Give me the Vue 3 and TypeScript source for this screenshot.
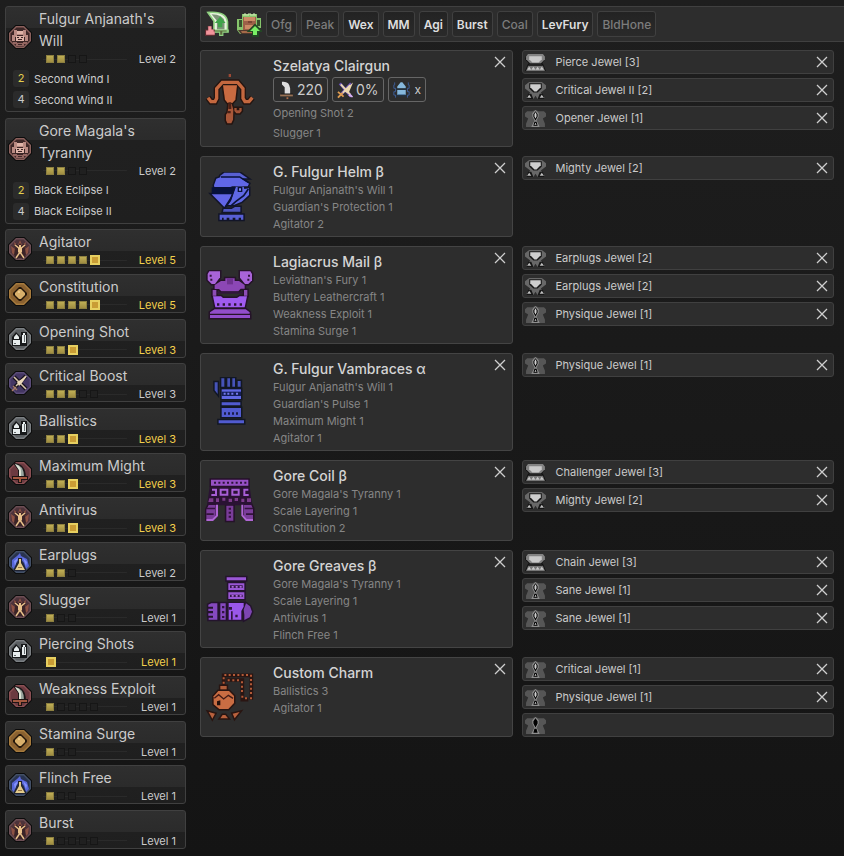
<script setup lang="ts">
import { h, type FunctionalComponent } from 'vue'

interface Shape {
  d: string
  fill?: string
  stroke?: string
  width?: number
  back?: boolean
}
interface Drawing {
  box: string
  shapes: Shape[]
}
interface Skill {
  name: string
  icon: string
  level: number
  max: number
  bonuses?: { pieces: number; name: string; active: boolean }[]
}
interface Gear {
  name: string
  icon: string
  skills: string[]
  weapon?: boolean
  jewels: { name: string; size: number }[]
}

const octagon = 'M8 1H16L23 8V16L16 23H8L1 16V8Z'
const f = (fill: string, d: string): Shape => ({ d, fill })
const s = (stroke: string, width: number, d: string): Shape => ({ d, stroke, width })
const outlined = (fill: string, edge: string, d: string): Shape[] => [
  { d, stroke: edge, width: 9, back: true },
  f(fill, d),
]
const badge = (fill: string, rim: string): Shape[] => [
  s('#0c0c0c', 2, octagon),
  f(rim, octagon),
  f(fill, 'M8.500 2.500H15.500L21.500 8.500V15.500L15.500 21.500H8.500L2.500 15.500V8.500Z'),
]

const drawings: Record<string, Drawing> = {
  set: {
    box: '0 0 24 24',
    shapes: [
      ...badge('#3d2727', '#8a605c'),
      f('#b98a82', 'M6 5H9V7H15V5H18V10H20V16H17V12H15V10H9V12H7V16H4V10H6Z'),
      f('#dfb4a8', 'M9 6H15V9H9ZM8 11H16V16H8Z'),
      f('#3d2525', 'M9 12H11V13H9ZM13 12H15V13H13ZM10 14H14V15H10Z'),
      f('#946661', 'M5 17H9V18H15V17H19V19H16V21H8V19H5Z'),
      f('#3d2727', 'M10 19H14V20H10Z'),
    ],
  },
  body: {
    box: '0 0 24 24',
    shapes: [
      ...badge('#4d333a', '#6c4e54'),
      f('#8d5244', 'M4 16L3 9L7 12L6 5L10 8L12 3L14 8L18 5L17 12L21 9L20 16L16 20H8Z'),
      f('#3b2428', 'M7 11L10 9L12 6L14 9L17 11L18 18L15 21H9L6 18Z'),
      s('#3b2428', 4, 'M7 8L12 12L17 8M8 21L12 14L16 21'),
      s('#e8c08a', 1.5, 'M7 8L12 12L17 8M8 21L12 15L16 21'),
      f('#e8c08a', 'M11 8H13V11H14V15L12 17L10 15V11H11Z'),
    ],
  },
  stamina: {
    box: '0 0 24 24',
    shapes: [
      ...badge('#8a6130', '#a67a3c'),
      f('#24170a', 'M11 5H13L19 11V13L13 19H11L5 13V11Z'),
      f('#d9b06b', 'M11 7H13L17 11V13L13 17H11L7 13V11Z'),
      f('#ecca8b', 'M10 9H12V11H10Z'),
    ],
  },
  shot: {
    box: '0 0 24 24',
    shapes: [
      ...badge('#5b5f62', '#7b7f82'),
      f('#17191b', 'M4 10L8 5L13 10V19H4ZM13 5H19V19H13Z'),
      f('#e7edee', 'M6 10L8.500 7L11 10V12H6ZM5 13H12V18H5ZM15 6H17V8H18V16H14V8H15Z'),
      f('#646b6e', 'M6 16H8V17H6ZM16 8H17V15H16Z'),
    ],
  },
  crit: {
    box: '0 0 24 24',
    shapes: [
      ...badge('#443663', '#5b4c78'),
      s('#17121e', 4, 'M6 6L18 18M18 5L6 17'),
      s('#d9c6ab', 1.5, 'M6 6L18 18M18 5L8 15'),
      s('#a77b67', 1.5, 'M5 15L9 19M4 20L8 16'),
      f('#ead7b9', 'M9 11L19 5L14 12L11 15Z'),
    ],
  },
  blade: {
    box: '0 0 24 24',
    shapes: [
      ...badge('#6b3a40', '#8a4f53'),
      f('#1b1718', 'M5 2Q18 2 18 17H10V9Z'),
      f('#9aa69f', 'M7 3Q16 4 16 16H11V9Z'),
      f('#dfe4d6', 'M7 3Q13 5 13 10V16H11V9Z'),
      f('#1e1414', 'M4 15H20V19H14V22H10V19H4Z'),
      f('#a3583f', 'M5 16H19V18H13V21H11V18H5Z'),
    ],
  },
  ear: {
    box: '0 0 24 24',
    shapes: [
      ...badge('#29334f', '#435066'),
      f('#5867d8', 'M4 17V10L9 6L12 3L13 6L19 9L21 16L18 19L16 13L12 8L8 13L6 19Z'),
      f('#8292ff', 'M6 11L10 8L7 16ZM15 8L19 12L18 16Z'),
      f('#202332', 'M10 8H14V12L19 21H5L10 12Z'),
      f('#e3cb8a', 'M11 9H13V13L17 20H7L11 13Z'),
      f('#987544', 'M10 17H14V18H10Z'),
    ],
  },
  gun: {
    box: '30 217 150 156',
    shapes: [
      s('#241511', 18, 'M39 288L48 300H60L65 290V261L82 242H128L144 261V290L150 300H162L172 288'),
      s('#c4683f', 10, 'M39 288L48 300H60L65 290V261L82 242H128L144 261V290L150 300H162L172 288'),
      ...outlined('#c96b41', '#241511', 'M84 251H126L121 294L112 304H98L90 294Z'),
      ...outlined('#a85739', '#241511', 'M101 306H110L115 325L114 354L109 365H97L93 356V339L98 332Z'),
      f('#4a2016', 'M100 302H109V322H100ZM97 328H107V335H97Z'),
      ...outlined('#a35437', '#241511', 'M118 319H125V326H133V319H140V328L134 335H124L118 328Z'),
      f('#9e4934', 'M101 217H108V226H101Z'),
    ],
  },
  helm: {
    box: '30 61 150 156',
    shapes: [
      ...outlined('#5860d2', '#121528', 'M76 72L88 63H134L158 80H76Z'),
      ...outlined('#6067e6', '#121528', 'M57 101L64 81L76 77H132L162 96L158 104H112L106 106H58Z'),
      f('#07113b', 'M50 107H122L112 128H50Z'),
      s('#07113b', 4, 'M78 76H134L160 92'),
      ...outlined('#6165e6', '#121528', 'M50 128H112L88 166Z'),
      ...outlined('#5f68e4', '#121528', 'M122 105H146L148 112L162 110V130L140 150L116 160H98L108 146Z'),
      s('#0b1338', 5, 'M120 106L106 146L92 166M160 112L146 132L122 150L106 164'),
      f('#0b1338', 'M128 106H142V121H128Z'),
      f('#7c87f3', 'M132 110H138V117H132Z'),
      ...outlined('#4e55be', '#121528', 'M86 172H110L120 166H136V180H84Z'),
      ...outlined('#585fd5', '#121528', 'M74 189H145V204H138V198H131V204H121V198H113V204H103V198H95V204H86V198H81V204H74Z'),
    ],
  },
  mail: {
    box: '30 357 150 156',
    shapes: [
      ...outlined('#a863d8', '#251329', 'M43 361H75V379L60 399H50L38 387V369Z'),
      ...outlined('#a863d8', '#251329', 'M135 361H166L171 369V388L160 399H150L135 380Z'),
      f('#32153d', 'M44 371H50V377H44ZM46 383H52V389H46ZM159 371H165V377H159ZM157 383H163V389H157Z'),
      ...outlined('#8c47b5', '#251329', 'M91 382H119V390H132L149 402V413H137L130 421H79L72 414H59V402L78 390H91Z'),
      f('#6f328f', 'M96 382H114V400H96Z'),
      f('#32153d', 'M66 422H144V428H66Z'),
      ...outlined('#8d4cb6', '#251329', 'M53 417H64V434H53ZM147 417H157V434H147Z'),
      ...outlined('#a05bf0', '#251329', 'M54 436H78L84 441H126L134 436H156L149 469H61Z'),
      f('#2b1437', 'M66 457H73V464H66ZM83 457H90V464H83ZM100 457H107V464H100ZM117 457H124V464H117ZM134 457H141V464H134Z'),
      ...outlined('#914dcb', '#251329', 'M59 475H152L164 484V488H45V484ZM45 492H165V501H45Z'),
    ],
  },
  arms: {
    box: '30 92 150 156',
    shapes: [
      ...outlined('#4653b8', '#121724', 'M59 108H68V143L59 132ZM79 96H88V121H79ZM97 96H105V121H97ZM112 96H120V121H112ZM128 104H137V121H128Z'),
      ...outlined('#6168e3', '#121724', 'M80 129H138V158H80Z'),
      f('#151e58', 'M80 136H138V149H80Z'),
      f('#7478ed', 'M86 139H92V145H86ZM97 139H103V145H97ZM109 139H115V145H109ZM123 139H129V145H123Z'),
      ...outlined('#515bd0', '#121724', 'M80 168H136V177H80ZM80 185H138V212H80ZM71 222H147V231H71Z'),
      f('#191c48', 'M87 198H93V205H87ZM99 198H105V205H99ZM111 198H117V205H111ZM123 198H129V205H123Z'),
    ],
  },
  coil: {
    box: '30 388 150 156',
    shapes: [
      f('#2a1233', 'M44 420H164L172 476H36Z'),
      ...outlined('#9650c4', '#251129', 'M48 399H160V417H48Z'),
      f('#2b1238', 'M57 405H63V411H57ZM70 405H76V411H70ZM83 405H89V411H83ZM96 405H102V411H96ZM109 405H115V411H109ZM122 405H128V411H122ZM135 405H141V411H135ZM148 405H154V411H148Z'),
      s('#a75ed6', 6, 'M51 429H63V445H49M77 429H97V444H77V426M112 429H131V444H112V426M160 429H148V445H161'),
      f('#7c3b8a', 'M43 455H55V466H40ZM63 455H72V466H63ZM82 453H91V462H82ZM101 456H111V466H101ZM119 454H129V463H119ZM139 456H148V466H139ZM156 455H168V466H156Z'),
      ...outlined('#7a3d99', '#251129', 'M41 475H62V507L53 518H34V489ZM94 477H115V522H94ZM147 475H169L174 486V518H155L147 507Z'),
      f('#34133e', 'M35 483H60V488H35ZM34 500H56V505H34ZM101 483H108V489H101ZM101 495H108V501H101ZM101 507H108V513H101ZM149 483H174V488H149ZM153 500H174V505H153Z'),
      s('#b066d4', 6, 'M66 474V507L53 520H34M142 474V506L154 520H174'),
    ],
  },
  boots: {
    box: '30 83 150 156',
    shapes: [
      ...outlined('#9a57d6', '#24142d', 'M95 93H153V102H95ZM100 111H148V131H100ZM100 138H148V158H100Z'),
      f('#35194a', 'M105 117H143V125H105ZM105 145H143V152H105Z'),
      f('#b16cde', 'M110 119H116V124H110ZM122 119H128V124H122ZM134 119H140V124H134ZM110 146H116V151H110ZM122 146H128V151H122ZM134 146H140V151H134Z'),
      ...outlined('#8549bf', '#24142d', 'M49 171H67V220H41V214H54V208H40V201H54V194H40V187H54V181H40V175ZM76 171H92V220H76Z'),
      ...outlined('#9a57ea', '#24142d', 'M101 170H146V181L139 194V220H101Z'),
      ...outlined('#7d45b2', '#24142d', 'M153 171L165 180L171 196L164 213L148 221V205L146 190Z'),
      f('#321541', 'M81 179H88V186H81ZM81 194H88V201H81ZM81 209H88V215H81ZM101 182H111V190H101ZM121 205H128V213H121ZM108 195H113V220H108Z'),
    ],
  },
  charm: {
    box: '30 376 150 156',
    shapes: [
      s('#2a1512', 11, 'M86 420V386H169V459M94 400H142V459H160'),
      f('#b35a37', 'M83 405H89V411H83ZM83 392H89V398H83ZM88 382H94V388H88ZM101 382H107V388H101ZM114 382H120V388H114ZM127 382H133V388H127ZM140 382H146V388H140ZM153 382H159V388H153ZM165 384H171V390H165ZM165 397H171V403H165ZM165 410H171V416H165ZM165 423H171V429H165ZM165 436H171V442H165ZM165 452H171V458H165ZM98 398H104V404H98ZM112 398H118V404H112ZM126 398H132V404H126ZM138 404H144V410H138ZM138 417H144V423H138ZM138 430H144V436H138ZM139 447H145V453H139ZM150 452H156V458H150Z'),
      ...outlined('#b05e3b', '#291511', 'M76 418H95V428H76Z'),
      ...outlined('#c96d43', '#291511', 'M70 433H102L117 448V469L100 487H73L56 473V449Z'),
      s('#421b16', 4, 'M58 455L71 444L86 457L100 446L114 455'),
      f('#25100c', 'M66 464L76 461V476H66Z'),
      ...outlined('#b9613d', '#291511', 'M41 496L60 501L52 516ZM113 501L134 496L119 515ZM76 515L83 505H91L99 515Z'),
    ],
  },
  attack: {
    box: '0 0 24 24',
    shapes: [
      s('#8fd080', 3, 'M4 2Q19 1 20 10V18H9V9Z'),
      f('#e9f5df', 'M4 2Q19 1 20 10V18H9V9Z'),
      f('#7d9478', 'M6 3Q17 3 18 10V17H11V9Z'),
      f('#3fa34a', 'M14 5L19 11H16V15H12V11H9Z'),
      f('#8fd080', 'M7 17H22V20H17V23H13V20H7Z'),
      f('#5f6b3f', 'M9 18H20V19H16V22H14V19H9Z'),
      f('#5d2b30', 'M2 14H6V17H9V23H0V17H3Z'),
      f('#f2949b', 'M3 14H6V17H8V19H9V22H1V18H3Z'),
    ],
  },
  meal: {
    box: '0 0 26 24',
    shapes: [
      f('#86c56c', 'M6 2H21V6H25V16H22V22H4L1 18V7H6Z'),
      f('#37502c', 'M3 8H6V15H3ZM21 8H24V14H21Z'),
      f('#9c6048', 'M7 5H20V18H7Z'),
      f('#cc8b66', 'M8 5H19V9H8ZM9 13H17V17H9Z'),
      f('#7b4434', 'M12 9H16V11H12Z'),
      s('#cfe9b4', 1, 'M8 4V2H10V4M12 4V2H15V4M17 4V2H19V4'),
      f('#50392d', 'M2 18H17V22H5Z'),
      f('#a56b49', 'M5 19H18V21H6Z'),
      s('#224824', 2, 'M19 13L25 19H22V24H17V19H13Z'),
      f('#79ef65', 'M19 14L24 19H21V23H17V19H14Z'),
    ],
  },
  sword: {
    box: '0 0 16 22',
    shapes: [
      f('#dedede', 'M3 2Q11 1 12 9V15H6V8L3 5Z'),
      f('#141414', 'M2 15H15V16H2Z'),
      f('#997255', 'M1 16H15V18H1Z'),
      f('#b06d47', 'M8 19H10V21H8Z'),
    ],
  },
  affinity: {
    box: '0 0 18 20',
    shapes: [
      s('#6850b7', 3, 'M3 3L15 17M15 3L4 15'),
      f('#ecd8b0', 'M17 2L12 14L7 11Z'),
      s('#ecd8b0', 2, 'M4 4L14 15M14 5L6 13'),
      s('#df9c50', 2, 'M1 12L7 17M1 18L6 13'),
      f('#d6b1ee', 'M14 14L17 17L16 18L12 16Z'),
    ],
  },
  ammo: {
    box: '0 0 20 20',
    shapes: [
      s('#3f63a6', 1, 'M2 1V4H1V8H3V12H1V16H3V19M18 1V4H19V8H17V12H19V16H17V19'),
      f('#86b8dc', 'M9 1H11L15 6V8H5V6ZM5 10H15V16H5Z'),
      f('#456e96', 'M5 15H15V16H5Z'),
      s('#1c354b', 1, 'M4 9H16M4 17H16'),
    ],
  },
}

const slot = (size: number, empty = false): Drawing => ({
  box: '0 0 20 16',
  shapes: size === 3
    ? [
        f('#111', 'M1 1H19V5L16 9H17L20 16H0L3 9H4L0 5Z'),
        f('#828282', 'M1 2L3 0H17L19 2V5L15 9H5L1 5Z'),
        f('#c8c8c8', 'M4 2H16V5L13 8H7L4 5Z'),
        f('#777', 'M3 11H17L19 16H1Z'),
        f('#222', 'M4 9H16V11H4Z'),
        f('#c9c9c9', 'M4 12L6 15H2ZM8 12L10 15H6ZM12 12L14 15H10ZM16 12L18 15H14Z'),
      ]
    : size === 2
      ? [
          f('#686868', 'M0 3L4 0H16L20 3V6L15 10L19 15V16H12L10 13L8 16H1V15L5 10L0 6Z'),
          f('#181818', 'M4 1H16V6L12 10H8L4 6Z'),
          f('#cecece', 'M5 2H15V5L11 9H9L5 5Z'),
          f('#161616', 'M3 11H6L8 16H1ZM14 11H17L19 16H12Z'),
          f('#c0c0c0', 'M4 12L6 15H2ZM16 12L18 15H14Z'),
        ]
      : [
          f('#565656', 'M0 3L2 1H7L10 0L13 1H18L20 3V6L17 8L19 13V16H1V13L3 8L0 6Z'),
          f('#8e8e8e', 'M10 0L13 3V6L11 10L14 16H6L9 10L7 6V3Z'),
          f('#000', 'M10 1L12 4V6L10 10L8 6V4ZM9 11H11L12 15H8Z'),
          f(empty ? '#000' : '#cfcfcf', 'M10 2L11 4V6L10 8L9 6V4ZM10 12L11 14H9Z'),
        ],
})

const Icon: FunctionalComponent<{ drawing: Drawing }> = ({ drawing }) => {
  const layers = [...drawing.shapes.filter((p) => p.back), ...drawing.shapes.filter((p) => !p.back)]
  return h('svg', { viewBox: drawing.box, 'aria-hidden': 'true' },
    layers.map((p) => h('path', { d: p.d, fill: p.fill ?? 'none', stroke: p.stroke, 'stroke-width': p.width })),
  )
}
Icon.props = ['drawing']

const cross: Drawing = { box: '0 0 12 12', shapes: [s('#cfcfcf', 1.25, 'M1 1L11 11M11 1L1 11')] }

const skills: Skill[] = [
  { name: "Fulgur Anjanath's Will", icon: 'set', level: 2, max: 4, bonuses: [{ pieces: 2, name: 'Second Wind I', active: true }, { pieces: 4, name: 'Second Wind II', active: false }] },
  { name: "Gore Magala's Tyranny", icon: 'set', level: 2, max: 4, bonuses: [{ pieces: 2, name: 'Black Eclipse I', active: true }, { pieces: 4, name: 'Black Eclipse II', active: false }] },
  { name: 'Agitator', icon: 'body', level: 5, max: 5 },
  { name: 'Constitution', icon: 'stamina', level: 5, max: 5 },
  { name: 'Opening Shot', icon: 'shot', level: 3, max: 3 },
  { name: 'Critical Boost', icon: 'crit', level: 3, max: 5 },
  { name: 'Ballistics', icon: 'shot', level: 3, max: 3 },
  { name: 'Maximum Might', icon: 'blade', level: 3, max: 3 },
  { name: 'Antivirus', icon: 'body', level: 3, max: 3 },
  { name: 'Earplugs', icon: 'ear', level: 2, max: 3 },
  { name: 'Slugger', icon: 'body', level: 1, max: 3 },
  { name: 'Piercing Shots', icon: 'shot', level: 1, max: 1 },
  { name: 'Weakness Exploit', icon: 'blade', level: 1, max: 5 },
  { name: 'Stamina Surge', icon: 'stamina', level: 1, max: 3 },
  { name: 'Flinch Free', icon: 'ear', level: 1, max: 3 },
  { name: 'Burst', icon: 'body', level: 1, max: 5 },
]

const toggles = [
  { label: 'Ofg', on: false },
  { label: 'Peak', on: false },
  { label: 'Wex', on: true },
  { label: 'MM', on: true },
  { label: 'Agi', on: true },
  { label: 'Burst', on: true },
  { label: 'Coal', on: false },
  { label: 'LevFury', on: true },
  { label: 'BldHone', on: false },
]

const gear: Gear[] = [
  { name: 'Szelatya Clairgun', icon: 'gun', weapon: true, skills: ['Opening Shot 2', 'Slugger 1'], jewels: [{ name: 'Pierce Jewel', size: 3 }, { name: 'Critical Jewel II', size: 2 }, { name: 'Opener Jewel', size: 1 }] },
  { name: 'G. Fulgur Helm β', icon: 'helm', skills: ["Fulgur Anjanath's Will 1", "Guardian's Protection 1", 'Agitator 2'], jewels: [{ name: 'Mighty Jewel', size: 2 }] },
  { name: 'Lagiacrus Mail β', icon: 'mail', skills: ["Leviathan's Fury 1", 'Buttery Leathercraft 1', 'Weakness Exploit 1', 'Stamina Surge 1'], jewels: [{ name: 'Earplugs Jewel', size: 2 }, { name: 'Earplugs Jewel', size: 2 }, { name: 'Physique Jewel', size: 1 }] },
  { name: 'G. Fulgur Vambraces α', icon: 'arms', skills: ["Fulgur Anjanath's Will 1", "Guardian's Pulse 1", 'Maximum Might 1', 'Agitator 1'], jewels: [{ name: 'Physique Jewel', size: 1 }] },
  { name: 'Gore Coil β', icon: 'coil', skills: ["Gore Magala's Tyranny 1", 'Scale Layering 1', 'Constitution 2'], jewels: [{ name: 'Challenger Jewel', size: 3 }, { name: 'Mighty Jewel', size: 2 }] },
  { name: 'Gore Greaves β', icon: 'boots', skills: ["Gore Magala's Tyranny 1", 'Scale Layering 1', 'Antivirus 1', 'Flinch Free 1'], jewels: [{ name: 'Chain Jewel', size: 3 }, { name: 'Sane Jewel', size: 1 }, { name: 'Sane Jewel', size: 1 }] },
  { name: 'Custom Charm', icon: 'charm', skills: ['Ballistics 3', 'Agitator 1'], jewels: [{ name: 'Critical Jewel', size: 1 }, { name: 'Physique Jewel', size: 1 }, { name: '', size: 1 }] },
]
</script>

<template>
  <div class="planner">
    <aside class="skills">
      <section v-for="skill in skills" :key="skill.name" class="skill">
        <div class="skill-head">
          <Icon class="skill-icon" :drawing="drawings[skill.icon]" />
          <div class="skill-body">
            <h3 class="skill-name">{{ skill.name }}</h3>
            <div class="skill-level" :class="{ full: skill.level === skill.max }">
              <div class="track">
                <span
                  v-for="n in skill.max"
                  :key="n"
                  class="pip"
                  :class="{ lit: n <= skill.level, top: n === skill.max && n === skill.level }"
                ></span>
              </div>
              <span class="level-text">Level {{ skill.level }}</span>
            </div>
          </div>
        </div>
        <ul v-if="skill.bonuses" class="bonuses">
          <li v-for="bonus in skill.bonuses" :key="bonus.name" class="bonus">
            <span class="pieces" :class="{ active: bonus.active }">{{ bonus.pieces }}</span>
            {{ bonus.name }}
          </li>
        </ul>
      </section>
    </aside>

    <main class="build">
      <div class="toolbar">
        <button type="button" class="buff" aria-label="Attack boosts"><Icon class="buff-icon" :drawing="drawings.attack" /></button>
        <button type="button" class="buff" aria-label="Meal boosts"><Icon class="buff-icon" :drawing="drawings.meal" /></button>
        <div class="toggles">
          <button
            v-for="toggle in toggles"
            :key="toggle.label"
            type="button"
            class="toggle"
            :class="{ on: toggle.on }"
            :aria-pressed="toggle.on"
          >{{ toggle.label }}</button>
        </div>
      </div>

      <div class="gear-list">
        <div v-for="item in gear" :key="item.name" class="gear-row">
          <article class="gear">
            <Icon class="gear-icon" :drawing="drawings[item.icon]" />
            <div class="gear-body">
              <h2 class="gear-name">{{ item.name }}</h2>
              <div v-if="item.weapon" class="stats">
                <span class="stat"><Icon class="stat-icon" :drawing="drawings.sword" />220</span>
                <span class="stat"><Icon class="stat-icon" :drawing="drawings.affinity" />0%</span>
                <span class="stat ammo"><Icon class="stat-icon" :drawing="drawings.ammo" />x</span>
              </div>
              <ul class="gear-skills" :class="{ roomy: item.weapon }">
                <li v-for="line in item.skills" :key="line">{{ line }}</li>
              </ul>
            </div>
            <button type="button" class="remove" :aria-label="`Remove ${item.name}`"><Icon class="cross" :drawing="cross" /></button>
          </article>

          <ul class="jewels">
            <li v-for="(jewel, i) in item.jewels" :key="i" class="jewel">
              <Icon class="slot" :drawing="slot(jewel.size, !jewel.name)" />
              <template v-if="jewel.name">
                <span class="jewel-name">{{ jewel.name }} [{{ jewel.size }}]</span>
                <button type="button" class="remove" :aria-label="`Remove ${jewel.name}`"><Icon class="cross" :drawing="cross" /></button>
              </template>
            </li>
          </ul>
        </div>
      </div>
    </main>
  </div>
</template>

<style>
body {
  margin: 0;
  background: #171717;
}
</style>

<style scoped>
.planner {
  display: grid;
  grid-template-columns: 200px minmax(0, 1fr);
  min-height: 100vh;
  box-sizing: border-box;
  background: linear-gradient(#1e1e1e, #141414);
  color: #cbcbcb;
  font-family: Inter, "Liberation Sans", sans-serif;
  font-size: 11px;
}

h2,
h3,
ul {
  margin: 0;
  padding: 0;
  list-style: none;
}

svg {
  display: block;
  flex: none;
}

button {
  font: inherit;
  color: inherit;
  cursor: pointer;
}

.skills {
  display: flex;
  flex-direction: column;
  justify-content: space-between;
  gap: 5px;
  padding: 6px 14px 7px 5px;
}

.skill {
  border: 1px solid #404040;
  border-radius: 3px;
  background: linear-gradient(#2f2f2f, #2b2b2b 21px, #202020 21px, #1f1f1f);
}

.skill-head {
  display: flex;
  align-items: center;
  gap: 7px;
  padding: 1px 0 0 2px;
}

.skill-icon {
  width: 24px;
  height: 24px;
}

.skill-body {
  flex: 1;
  min-width: 0;
}

.skill-name {
  padding-right: 9px;
  font-size: 14px;
  font-weight: 400;
  line-height: 22px;
}

.skill-level {
  display: flex;
  align-items: center;
  gap: 12px;
  height: 14px;
  padding: 0 9px 0 4px;
}

.full {
  color: #f2d04c;
}

.level-text {
  min-width: 37px;
  text-align: right;
  line-height: 14px;
}

.track {
  display: flex;
  flex: 1;
  align-items: center;
  gap: 3px;
  height: 10px;
  padding-left: 3px;
  background: linear-gradient(#2a2a2a, #2a2a2a) center / 100% 1px no-repeat;
}

.pip {
  box-sizing: border-box;
  width: 8px;
  height: 8px;
  border: 1px solid #161616;
  background: #202020;
}

.pip.lit {
  border-color: #8d8040;
  background: linear-gradient(#bfae55, #a08d42);
}

.pip.top {
  width: 10px;
  height: 10px;
  border: 2px solid #e6cf60;
  background: #c99c35;
}

.bonuses {
  padding: 2px 7px 1px;
}

.bonus {
  display: flex;
  align-items: center;
  gap: 5px;
  height: 21px;
}

.pieces {
  width: 16px;
  border-radius: 3px;
  background: #2b2b2b;
  text-align: center;
  line-height: 17px;
}

.pieces.active {
  color: #e5d04e;
}

.build {
  padding-top: 6px;
}

.toolbar {
  display: flex;
  align-items: center;
  gap: 3px;
  height: 34px;
  padding-left: 3px;
  border: 1px solid #404040;
  border-right: 0;
  border-radius: 3px 0 0 3px;
  background: #2d2d2d;
}

.buff {
  padding: 0 1px;
  border: 0;
  background: none;
}

.buff-icon {
  width: 26px;
  height: 26px;
}

.toggles {
  display: flex;
  gap: 4px;
}

.toggle {
  height: 26px;
  padding: 0 4px;
  border: 1px solid #404040;
  border-radius: 3px;
  background: linear-gradient(#232323, #2a2a2a);
  color: #7c7c7c;
  font-size: 12px;
  font-weight: 500;
}

.toggle.on {
  color: #dedede;
  font-weight: 600;
}

.gear-list {
  display: grid;
  gap: 9px;
  padding: 8px 10px 8px 0;
}

.gear-row {
  display: grid;
  grid-template-columns: repeat(2, minmax(0, 1fr));
  gap: 9px;
}

.gear {
  display: flex;
  align-items: center;
  padding: 5px 6px 3px 4px;
  border: 1px solid #444;
  border-radius: 3px;
  background: #2d2d2d;
}

.gear-icon {
  width: 50px;
  height: 52px;
}

.gear-body {
  flex: 1;
  align-self: flex-start;
  min-width: 0;
  margin-left: 18px;
}

.gear-name {
  color: #d4d4d4;
  font-size: 14px;
  font-weight: 500;
  line-height: 20px;
}

.gear-skills {
  color: #868686;
  line-height: 17px;
}

.roomy {
  line-height: 20px;
}

.stats {
  display: flex;
  gap: 4px;
  padding: 1px 0;
}

.stat {
  display: flex;
  align-items: center;
  gap: 2px;
  height: 23px;
  padding: 0 4px;
  border: 1px solid #666;
  border-radius: 3px;
  font-size: 14px;
}

.ammo {
  gap: 5px;
  font-size: 12px;
}

.stat-icon {
  width: 17px;
  height: 20px;
}

.remove {
  padding: 0;
  border: 0;
  background: none;
}

.gear .remove {
  align-self: flex-start;
}

.cross {
  width: 12px;
  height: 12px;
}

.jewels {
  display: flex;
  flex-direction: column;
  gap: 4px;
}

.jewel {
  display: flex;
  align-items: center;
  gap: 10px;
  height: 22px;
  padding: 0 5px 0 2px;
  border: 1px solid #404040;
  border-radius: 3px;
  background: #2d2d2d;
}

.slot {
  width: 21px;
  height: 17px;
}

.jewel-name {
  flex: 1;
}
</style>
